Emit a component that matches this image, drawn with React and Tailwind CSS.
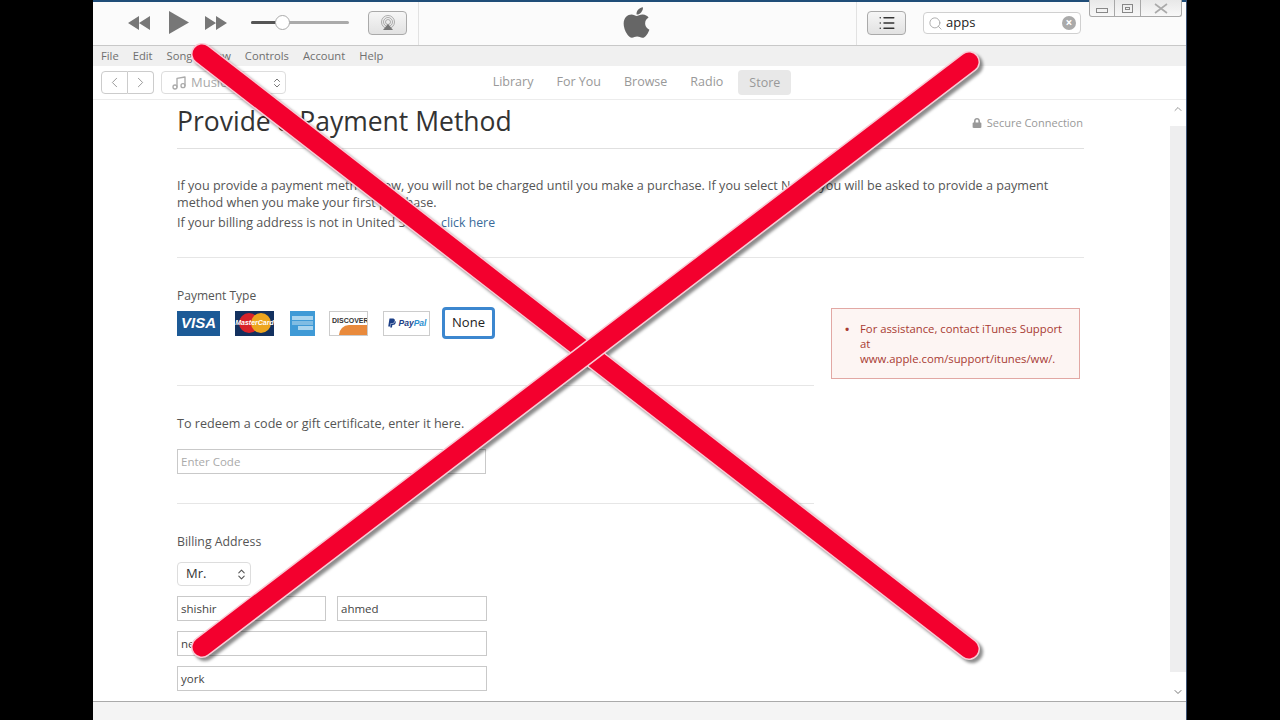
import { FaApple, FaLock, FaPaypal } from 'react-icons/fa';
import { ChevronDown, ChevronLeft, ChevronRight, ChevronUp, ChevronsUpDown, List, Music, Search } from 'lucide-react';

const MENU = ['File', 'Edit', 'Song', 'View', 'Controls', 'Account', 'Help'];
const TABS = ['Library', 'For You', 'Browse', 'Radio'];

function Rewind({ flip }) {
  return (
    <svg width="22" height="14" viewBox="0 0 22 14" className={flip ? 'rotate-180' : ''}>
      <path d="M11 0v14L0 7zM22 0v14L11 7z" fill="#777" />
    </svg>
  );
}

function Airplay() {
  return (
    <svg width="16" height="16" viewBox="0 0 16 16" fill="none" stroke="#999" strokeWidth="0.8">
      <circle cx="8" cy="7" r="6.5" />
      <circle cx="8" cy="7" r="4.5" />
      <circle cx="8" cy="7" r="2.5" />
      <path d="M8 9l5 6H3z" fill="#777" stroke="none" />
    </svg>
  );
}

function TextInput({ value, placeholder, className }) {
  return (
    <div className={`h-[25px] border border-[#c9c9c9] bg-white px-[3px] flex items-center text-[11.5px] ${value ? 'text-[#444]' : 'text-[#aaa]'} ${className}`}>
      {value || placeholder}
    </div>
  );
}

function PaymentCards() {
  return (
    <div className="flex items-center mt-[5px] h-[28px]">
      <div className="w-[43px] h-[25px] bg-[#1c5a96] text-white italic font-bold text-[15px] flex items-center justify-center font-['Liberation_Sans',sans-serif]">VISA</div>
      <div className="ml-[15px] w-[39px] h-[25px] bg-[#13315f] relative overflow-hidden flex items-center justify-center">
        <svg width="36" height="22" viewBox="0 0 36 22" className="absolute">
          <circle cx="12" cy="11" r="10" fill="#d8232a" />
          <circle cx="24" cy="11" r="10" fill="#eda51e" />
        </svg>
        <span className="relative text-white italic font-bold text-[7px] font-['Liberation_Sans',sans-serif]">MasterCard</span>
      </div>
      <div className="ml-[16px] w-[25px] h-[25px] bg-[#3f9ad6] flex flex-col justify-center gap-[1px] px-[2px]">
        <div className="h-[4px] bg-[#a9d4ee]" />
        <div className="h-[4px] bg-[#7fbce3]" />
        <div className="h-[4px] bg-[#a9d4ee] ml-[6px]" />
      </div>
      <div className="ml-[14px] w-[39px] h-[25px] bg-white border border-[#ccc] relative overflow-hidden">
        <div className="absolute bottom-0 right-0 w-[28px] h-[10px] bg-[#e98a3c] rounded-tl-[20px]" />
        <span className="absolute left-[2px] top-[4px] text-[#333] font-bold text-[7px] font-['Liberation_Sans',sans-serif]">DISCOVER</span>
      </div>
      <div className="ml-[15px] w-[47px] h-[25px] bg-white border border-[#ccc] flex items-center justify-center gap-[2px]">
        <FaPaypal size={10} color="#1c3f86" />
        <span className="italic font-bold text-[8.5px] text-[#1c3f86] font-['Liberation_Sans',sans-serif]">Pay<span className="text-[#2b8fd0]">Pal</span></span>
      </div>
      <div className="ml-[12px] mb-[1px] w-[53px] h-[32px] rounded-[4px] border-[3px] border-[#3c87cf] bg-white flex items-center justify-center text-[13px] text-[#222] font-medium">None</div>
    </div>
  );
}

export default function App() {
  return (
    <div className="relative w-[1280px] h-[720px] overflow-hidden bg-black font-['Open_Sans','Noto_Sans',sans-serif]">
      <div className="ml-[93px] w-[1094px] h-[720px] flex flex-col border-r border-[#3c5273] bg-white relative">
        <div className="relative h-[46px] shrink-0 flex bg-[#fbfbfb] border-t-2 border-b border-t-[#1f4d78] border-b-[#c8c8c8]">
          <div className="w-[326px] flex items-center border-r border-[#e2e2e2] pl-[35px] pb-[2px]">
            <Rewind />
            <svg width="20" height="23" viewBox="0 0 20 23" className="ml-[19px]"><path d="M0 0l20 11.5L0 23z" fill="#777" /></svg>
            <div className="ml-[16px]"><Rewind flip /></div>
            <div className="ml-[24px] w-[98px] h-[3px] rounded-full bg-[#aaa] relative">
              <div className="w-[31px] h-full rounded-l-full bg-[#555]" />
              <div className="absolute left-[24px] top-[-6px] w-[15px] h-[15px] rounded-full bg-white border border-[#aaa]" />
            </div>
            <div className="ml-[19px] w-[39px] h-[24px] rounded-[4px] border border-[#aaa] bg-gradient-to-b from-[#f6f6f6] to-[#e2e2e2] flex items-center justify-center"><Airplay /></div>
          </div>
          <div className="flex-1 flex items-center justify-center border-r border-[#e2e2e2] pb-[3px] pr-[2px]">
            <FaApple size={35} color="#666" />
          </div>
          <div className="w-[329px] flex items-start pt-[9px]">
            <div className="ml-[10px] w-[39px] h-[24px] rounded-[4px] border border-[#aaa] bg-gradient-to-b from-[#f6f6f6] to-[#e2e2e2] flex items-center justify-center">
              <List size={18} color="#333" strokeWidth={2} />
            </div>
            <div className="ml-[17px] mt-[1px] w-[158px] h-[22px] rounded-[4px] border border-[#d0d0d0] bg-white flex items-center pl-[4px] pr-[4px]">
              <Search size={15} color="#aaa" strokeWidth={1.5} />
              <span className="ml-[3px] text-[13px] text-[#222] flex-1">apps</span>
              <span className="w-[14px] h-[14px] rounded-full bg-[#aaa] text-white text-[12px] leading-[13px] text-center font-bold">×</span>
            </div>
          </div>
          <div className="absolute right-[4px] top-[-2px] w-[93px] h-[17px] flex border border-t-0 border-[#a8a8a8] rounded-b-[3px] bg-gradient-to-b from-[#e8e8e8] to-[#f8f8f8]">
            <div className="w-[25px] border-r border-[#a8a8a8] flex items-center justify-center"><div className="w-[12px] h-[5px] mt-[4px] border border-[#888]" /></div>
            <div className="w-[26px] border-r border-[#a8a8a8] flex items-center justify-center"><div className="w-[11px] h-[9px] border border-[#888] flex items-center justify-center"><div className="w-[5px] h-[3px] border border-[#888]" /></div></div>
            <div className="flex-1 flex items-center justify-center">
              <svg width="14" height="11" viewBox="0 0 14 11" fill="none" stroke="#aaa" strokeWidth="1.6"><path d="M1 1l12 9M13 1L1 10" /></svg>
            </div>
          </div>
        </div>

        <div className="h-[20px] shrink-0 bg-[#f0f0f0] flex items-center pl-[8px] gap-[14px] text-[11.2px] text-[#6f6f6f]">
          {MENU.map((m) => <span key={m}>{m}</span>)}
        </div>

        <div className="relative h-[34px] shrink-0 flex items-center justify-center border-b border-[#ececec] bg-white">
          <div className="absolute left-[8px] top-[5px] flex items-center">
            <div className="w-[27px] h-[23px] rounded-l-[4px] border border-[#ccc] flex items-center justify-center"><ChevronLeft size={17} color="#888" strokeWidth={1.2} /></div>
            <div className="w-[26px] h-[23px] rounded-r-[4px] border border-l-0 border-[#ccc] flex items-center justify-center"><ChevronRight size={17} color="#888" strokeWidth={1.2} /></div>
            <div className="ml-[7px] w-[125px] h-[23px] rounded-[4px] border border-[#ddd] flex items-center pl-[9px] pr-[2px] text-[13px] text-[#aaa]">
              <Music size={16} color="#aaa" />
              <span className="ml-[4px] flex-1">Music</span>
              <ChevronsUpDown size={12} color="#777" />
            </div>
          </div>
          <div className="flex items-center gap-[23px] text-[12.5px] text-[#999] ml-[5px]">
            {TABS.map((t) => <span key={t}>{t}</span>)}
            <span className="ml-[-8px] px-[11px] h-[25px] leading-[25px] rounded-[4px] bg-[#e8e8e8]">Store</span>
          </div>
        </div>

        <div className="relative flex-1 min-h-0 overflow-hidden pl-[84px] pr-[102px] text-[#555]">
          <div className="h-[49px] flex items-end justify-between border-b border-[#e0e0e0] pb-[7px]">
            <h1 className="text-[26.5px] leading-[40px] text-[#333]">Provide a Payment Method</h1>
            <span className="flex items-center gap-[5px] text-[11px] text-[#999] mb-[10px] mr-[1px]"><FaLock size={10} /> Secure Connection</span>
          </div>

          <div className="h-[109px] border-b border-[#e6e6e6] pt-[28px] text-[12.6px] leading-[17px]">
            <p className="pr-[1px]">If you provide a payment method now, you will not be charged until you make a purchase. If you select None, you will be asked to provide a payment method when you make your first purchase.</p>
            <p className="mt-[3px]">If your billing address is not in United States, <span className="text-[12.3px] text-[#3a6a9a]">click here</span></p>
          </div>

          <div className="flex">
            <div className="w-[637px]">
              <div className="h-[128px] border-b border-[#e6e6e6] pt-[29px]">
                <p className="text-[12px] leading-[17px]">Payment Type</p>
                <PaymentCards />
              </div>
              <div className="h-[118px] border-b border-[#e6e6e6] pt-[29px]">
                <p className="text-[12.6px] leading-[17px]">To redeem a code or gift certificate, enter it here.</p>
                <TextInput placeholder="Enter Code" className="mt-[17px] w-[309px]" />
              </div>
              <p className="mt-[29px] text-[12.3px] leading-[17px]">Billing Address</p>
              <div className="mt-[12px] w-[74px] h-[24px] rounded-[4px] border border-[#ddd] flex items-center pl-[8px] pr-[2px] text-[13px] text-[#333] font-medium">
                <span className="flex-1">Mr.</span>
                <ChevronsUpDown size={13} color="#555" />
              </div>
              <div className="mt-[10px] flex gap-[11px]">
                <TextInput value="shishir" className="w-[149px]" />
                <TextInput value="ahmed" className="w-[150px]" />
              </div>
              <TextInput value="new" className="mt-[10px] w-[310px]" />
              <TextInput value="york" className="mt-[10px] w-[310px]" />
            </div>
            <div className="ml-[17px] mt-[50px] w-[249px] h-[71px] border border-[#e2a8a4] bg-[#fdf5f3] pl-[13px] pr-[12px] pt-[12px] text-[11.3px] leading-[15px] text-[#a83a32] flex items-start self-start">
              <span className="w-[15px] shrink-0 font-bold">•</span>
              <p>For assistance, contact iTunes Support at www.apple.com/support/itunes/ww/.</p>
            </div>
          </div>

          <div className="absolute right-0 top-0 bottom-0 w-[16px] flex flex-col items-center">
            <ChevronUp size={12} color="#999" className="mt-[3px]" />
            <div className="mt-[11px] w-full h-[546px] bg-[#eeeeef]" />
            <ChevronDown size={12} color="#777" className="mt-[14px]" />
          </div>
        </div>

        <div className="h-[19px] shrink-0 bg-[#f4f4f4] border-t border-[#aaa]" />
      </div>

      <svg width="1280" height="720" className="absolute inset-0 pointer-events-none">
        <defs>
          <filter id="soft" x="-5%" y="-5%" width="110%" height="110%">
            <feGaussianBlur stdDeviation="1.6" />
          </filter>
        </defs>
        <g strokeLinecap="round" fill="none">
          <g filter="url(#soft)" stroke="#000" strokeOpacity="0.45" strokeWidth="22">
            <line x1="205" y1="57" x2="972" y2="652" />
            <line x1="972" y1="65" x2="205" y2="650" />
          </g>
          <line x1="202" y1="54" x2="969" y2="649" stroke="#f8ccd6" strokeWidth="22" />
          <line x1="202" y1="54" x2="969" y2="649" stroke="#f3002e" strokeWidth="19" />
          <line x1="969" y1="62" x2="202" y2="647" stroke="#f8ccd6" strokeWidth="22" />
          <line x1="969" y1="62" x2="202" y2="647" stroke="#f3002e" strokeWidth="19" />
        </g>
      </svg>
    </div>
  );
}
